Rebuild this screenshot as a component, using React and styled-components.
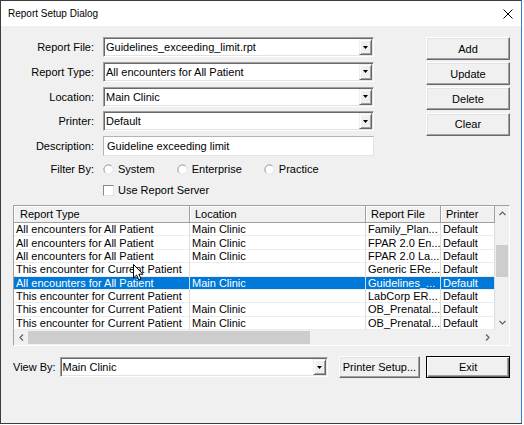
import React from "react";
import styled, { createGlobalStyle, css } from "styled-components";

const GlobalStyle = createGlobalStyle`
  html, body {
    margin: 0;
    padding: 0;
    background: #ffffff;
  }
  body {
    font-family: "Liberation Sans", Arial, sans-serif;
    font-size: 11px;
    color: #000000;
  }
  * {
    box-sizing: border-box;
  }
`;

const Window = styled.div`
  position: relative;
  display: flex;
  flex-direction: column;
  width: 522px;
  height: 424px;
  border: 1px solid #3c3c3c;
  border-right-color: #2f7fd6;
  background: #f0f0f0;
`;

const TitleBar = styled.div`
  display: flex;
  align-items: center;
  justify-content: space-between;
  height: 25px;
  padding: 0 8px 0 7px;
  background: #ffffff;
  font-size: 10px;
`;

const Body = styled.div`
  flex: 1;
  display: flex;
  flex-direction: column;
  padding: 11px 11px 0 12px;
`;

const TopSection = styled.div`
  display: flex;
  align-items: flex-start;
  gap: 52px;
`;

const Form = styled.div`
  display: grid;
  grid-template-columns: 81px 271px;
  grid-template-rows: repeat(5, 20px) 16.5px 16px;
  column-gap: 9px;
  row-gap: 4.75px;
  align-items: center;
`;

const Label = styled.span`
  text-align: right;
  white-space: nowrap;
`;

const Field = styled.div`
  display: flex;
  align-items: center;
  width: ${(p) => (p.$width ? `${p.$width}px` : "auto")};
  height: ${(p) => p.$height || 20}px;
  background: #ffffff;
  border: 1px solid;
  border-color: #a0a0a0 #ffffff #ffffff #a0a0a0;
  ${(p) =>
    p.$plain
      ? css`
          border-color: #b4b4b4 #e3e3e3 #e3e3e3 #b4b4b4;
        `
      : css`
          box-shadow: inset 1px 1px #696969, inset -1px -1px #e3e3e3;
        `}
`;

const FieldText = styled.span`
  flex: 1;
  padding-left: ${(p) => (p.$plain ? 3 : 2)}px;
  white-space: nowrap;
  overflow: hidden;
`;

const DropButton = styled.span`
  display: flex;
  align-items: center;
  justify-content: center;
  width: 13px;
  align-self: stretch;
  margin: 1px 1px 1px 0;
  background: #f0f0f0;
  border: 1px solid;
  border-color: #f0f0f0 #696969 #696969 #f0f0f0;
  box-shadow: inset 1px 1px #ffffff, inset -1px -1px #a0a0a0;
`;

const ButtonColumn = styled.div`
  display: flex;
  flex-direction: column;
  gap: 2.2px;
`;

const PushButton = styled.button`
  width: ${(p) => p.$width}px;
  height: ${(p) => p.$height}px;
  padding: 0;
  font-family: inherit;
  font-size: 11px;
  color: #000000;
  background: #f0f0f0;
  border: 1px solid;
  border-color: #ffffff #696969 #696969 #ffffff;
  box-shadow: inset -1px -1px #a0a0a0, inset 1px 1px #e3e3e3;
  ${(p) =>
    p.$default &&
    css`
      border-color: #000000;
      box-shadow: inset 1px 1px #ffffff, inset -1px -1px #696969,
        inset -2px -2px #a0a0a0;
    `}
`;

const OptionRow = styled.div`
  display: flex;
  align-items: center;
  gap: 22px;
`;

const Option = styled.span`
  display: flex;
  align-items: center;
  gap: 4px;
  white-space: nowrap;
`;

const CheckBox = styled.span`
  width: 11px;
  height: 11px;
  background: #ffffff;
  border: 1px solid;
  border-color: #8a8a8a #e3e3e3 #e3e3e3 #8a8a8a;
`;

const ListView = styled.div`
  margin-top: 7px;
  display: grid;
  grid-template-columns: 481px 14px;
  grid-template-rows: 124px 15px;
  border: 1px solid;
  border-color: #a0a0a0 #ffffff #ffffff #a0a0a0;
  background: #ffffff;
`;

const Table = styled.div`
  display: flex;
  flex-direction: column;
  overflow: hidden;
`;

const columns = "176px 176px 75px 54px";

const HeaderRow = styled.div`
  display: grid;
  grid-template-columns: ${columns};
  height: 17px;
  flex-shrink: 0;
  background: #f0f0f0;
`;

const HeaderCell = styled.div`
  display: flex;
  align-items: center;
  padding-left: ${(p) => p.$pad || 5}px;
  border-right: 1px solid #a0a0a0;
  border-bottom: 1px solid #a0a0a0;
  box-shadow: inset 1px 1px #ffffff;
  white-space: nowrap;
  overflow: hidden;
`;

const Row = styled.div`
  display: grid;
  grid-template-columns: ${columns};
  height: 13.375px;
  flex-shrink: 0;
  background: ${(p) => (p.$selected ? "#0078d7" : "#ffffff")};
  color: ${(p) => (p.$selected ? "#ffffff" : "#000000")};
`;

const Cell = styled.div`
  display: flex;
  align-items: center;
  padding-left: 2px;
  border-right: 1px solid #dcdcdc;
  border-bottom: 1px solid #ececec;
  white-space: nowrap;
  overflow: hidden;
  line-height: 12px;
`;

const VScroll = styled.div`
  display: flex;
  flex-direction: column;
  background: #f0f0f0;
`;

const HScroll = styled.div`
  display: flex;
  align-items: center;
  background: #f0f0f0;
`;

const ArrowBox = styled.span`
  display: flex;
  align-items: center;
  justify-content: center;
  flex-shrink: 0;
  width: ${(p) => p.$w}px;
  height: ${(p) => p.$h}px;
`;

const VTrack = styled.div`
  flex: 1;
  display: flex;
  flex-direction: column;
  align-items: center;
`;

const VThumb = styled.div`
  width: 12px;
  height: 32px;
  margin-top: 24px;
  background: #cdcdcd;
`;

const HThumb = styled.div`
  width: 282px;
  height: 13px;
  background: #cdcdcd;
`;

const Spacer = styled.div`
  flex: 1;
`;

const Corner = styled.div`
  background: #f0f0f0;
`;

const BottomBar = styled.div`
  display: flex;
  align-items: center;
  margin-top: 10px;
`;

const ViewByLabel = styled.span`
  margin-right: 4px;
  white-space: nowrap;
`;

const Cursor = styled.svg`
  position: absolute;
  left: 132px;
  top: 263px;
`;

const Triangle = () => (
  <svg width="5" height="3" viewBox="0 0 5 3">
    <polygon points="0,0 5,0 2.5,3" fill="#000" />
  </svg>
);

const Combo = ({ value, width, height }) => (
  <Field $width={width} $height={height}>
    <FieldText>{value}</FieldText>
    <DropButton>
      <Triangle />
    </DropButton>
  </Field>
);

const Radio = () => (
  <svg width="11" height="11" viewBox="0 0 12 12">
    <circle cx="6" cy="6" r="5" fill="#fff" />
    <path d="M2.46 9.54 A5 5 0 0 1 9.54 2.46" fill="none" stroke="#8a8a8a" />
    <path d="M9.54 2.46 A5 5 0 0 1 2.46 9.54" fill="none" stroke="#e3e3e3" />
  </svg>
);

const Chevron = ({ dir }) => {
  const pts = {
    up: "0.5,4 3.5,1 6.5,4",
    down: "0.5,1 3.5,4 6.5,1",
    left: "4,0.5 1,3.5 4,6.5",
    right: "1,0.5 4,3.5 1,6.5",
  }[dir];
  const vertical = dir === "up" || dir === "down";
  return (
    <svg width={vertical ? 7 : 5} height={vertical ? 5 : 7}>
      <polyline points={pts} fill="none" stroke="#606060" strokeWidth="1.2" />
    </svg>
  );
};

const rows = [
  ["All encounters for All Patient", "Main Clinic", "Family_Plan...", "Default"],
  ["All encounters for All Patient", "Main Clinic", "FPAR 2.0 En...", "Default"],
  ["All encounters for All Patient", "Main Clinic", "FPAR 2.0 La...", "Default"],
  ["This encounter for Current Patient", "", "Generic ERe...", "Default"],
  ["All encounters for All Patient", "Main Clinic", "Guidelines_...", "Default"],
  ["This encounter for Current Patient", "", "LabCorp ER...", "Default"],
  ["This encounter for Current Patient", "Main Clinic", "OB_Prenatal...", "Default"],
  ["This encounter for Current Patient", "Main Clinic", "OB_Prenatal...", "Default"],
];

const selectedIndex = 4;

const App = () => {
  return (
    <>
      <GlobalStyle />
      <Window>
        <TitleBar>
          <span>Report Setup Dialog</span>
          <svg width="10" height="10" viewBox="0 0 10 10">
            <path d="M0.5 0.5 L9.5 9.5 M9.5 0.5 L0.5 9.5" stroke="#000" strokeWidth="1" />
          </svg>
        </TitleBar>
        <Body>
          <TopSection>
            <Form>
              <Label>Report File:</Label>
              <Combo value="Guidelines_exceeding_limit.rpt" />
              <Label>Report Type:</Label>
              <Combo value="All encounters for All Patient" />
              <Label>Location:</Label>
              <Combo value="Main Clinic" />
              <Label>Printer:</Label>
              <Combo value="Default" />
              <Label>Description:</Label>
              <Field $plain>
                <FieldText $plain>Guideline exceeding limit</FieldText>
              </Field>
              <Label>Filter By:</Label>
              <OptionRow>
                <Option>
                  <Radio /> System
                </Option>
                <Option>
                  <Radio /> Enterprise
                </Option>
                <Option>
                  <Radio /> Practice
                </Option>
              </OptionRow>
              <span />
              <OptionRow>
                <Option>
                  <CheckBox /> Use Report Server
                </Option>
              </OptionRow>
            </Form>
            <ButtonColumn>
              <PushButton $width={84} $height={23}>Add</PushButton>
              <PushButton $width={84} $height={23}>Update</PushButton>
              <PushButton $width={84} $height={23}>Delete</PushButton>
              <PushButton $width={84} $height={23}>Clear</PushButton>
            </ButtonColumn>
          </TopSection>

          <ListView>
            <Table>
              <HeaderRow>
                <HeaderCell $pad={6}>Report Type</HeaderCell>
                <HeaderCell>Location</HeaderCell>
                <HeaderCell>Report File</HeaderCell>
                <HeaderCell>Printer</HeaderCell>
              </HeaderRow>
              {rows.map((r, i) => (
                <Row key={i} $selected={i === selectedIndex}>
                  {r.map((c, j) => (
                    <Cell key={j}>{c}</Cell>
                  ))}
                </Row>
              ))}
            </Table>
            <VScroll>
              <ArrowBox $w={14} $h={15}>
                <Chevron dir="up" />
              </ArrowBox>
              <VTrack>
                <VThumb />
              </VTrack>
              <ArrowBox $w={14} $h={15}>
                <Chevron dir="down" />
              </ArrowBox>
            </VScroll>
            <HScroll>
              <ArrowBox $w={14} $h={15}>
                <Chevron dir="left" />
              </ArrowBox>
              <HThumb />
              <Spacer />
              <ArrowBox $w={15} $h={15}>
                <Chevron dir="right" />
              </ArrowBox>
            </HScroll>
            <Corner />
          </ListView>

          <BottomBar>
            <ViewByLabel>View By:</ViewByLabel>
            <Combo value="Main Clinic" width={269} height={20} />
            <PushButton $width={82} $height={22} style={{ marginLeft: 11 }}>
              Printer Setup...
            </PushButton>
            <PushButton $width={84} $height={22} $default style={{ marginLeft: 6 }}>
              Exit
            </PushButton>
          </BottomBar>
        </Body>
        <Cursor width="12" height="17" viewBox="0 0 12 17">
          <path
            d="M0.5 0.5 V14 L3.6 11 L5.8 16 L8 15 L5.9 10.2 H10 Z"
            fill="#fff"
            stroke="#000"
            strokeWidth="1"
          />
        </Cursor>
      </Window>
    </>
  );
};

export default App;
